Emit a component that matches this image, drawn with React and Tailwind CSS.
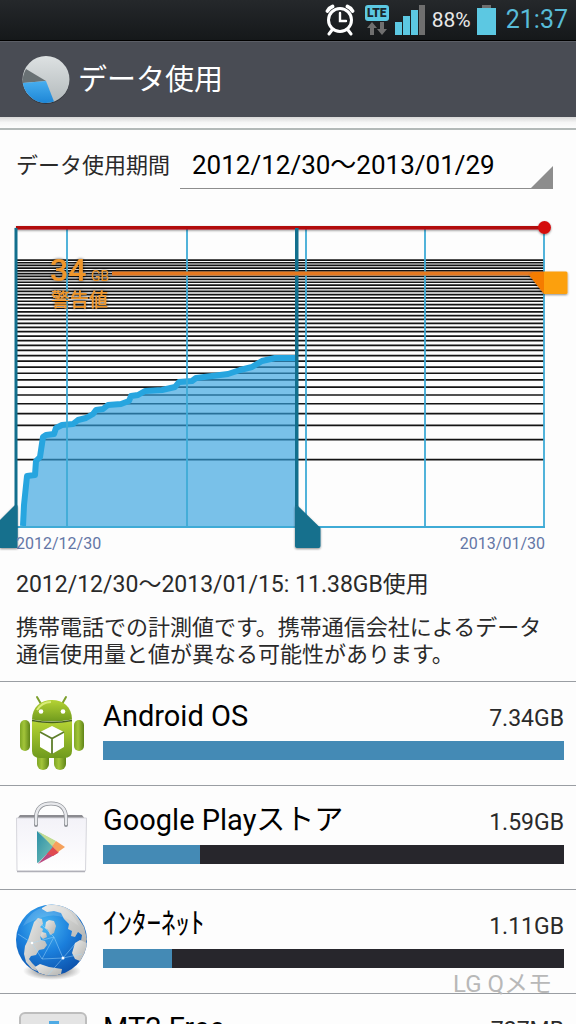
import React from 'react';

const APPS = [
  { name: 'Android OS', usage: '7.34GB', percent: 100, Icon: AndroidIcon },
  { name: 'Google Playストア', usage: '1.59GB', percent: 21, Icon: PlayStoreIcon },
  { name: 'ｲﾝﾀｰﾈｯﾄ', usage: '1.11GB', percent: 15, Icon: GlobeIcon },
  { name: 'MT2 Free', usage: '727MB', percent: 10, Icon: DownloadIcon },
];

const CHART_BOTTOM = 527;
const WEEKS = [67, 187, 306, 425, 544];

// One line per gigabyte on a compressed scale
const GIGABYTES = Array.from({ length: 39 }, (_, i) => CHART_BOTTOM - 67.3 * Math.pow(i + 1, 0.376));

const SERIES =
  '23,526 24,505 27,476 35,475 36,461 40,457 43,437 46,435 54,434 56,428 62,425 73,424 78,420 86,418 93,414 96,410 103,409 108,405 121,404 129,401 131,396 138,395 145,391 162,390 175,387 179,382 192,381 196,378 212,376 228,374 240,370 252,367 262,361 275,358 296,358';

function AlarmIcon() {
  return (
    <svg viewBox="0 0 30 32" className="w-[30px] h-8" fill="none" stroke="white" strokeLinecap="round">
      <circle cx="15" cy="16" r="11.5" strokeWidth="3" />
      <path d="M15 9v8h6" strokeWidth="2.4" />
      <path d="M2.500 7a9 9 0 0 1 5-4.500M27.500 7a9 9 0 0 0-5-4.500" strokeWidth="3.800" />
      <path d="M7 26l-3 4M23 26l3 4" strokeWidth="3" />
    </svg>
  );
}

function LteIcon() {
  return (
    <div className="flex flex-col items-center gap-px w-6">
      <span className="w-6 rounded-[3px] bg-[#5cc8e2] text-center text-[12px] leading-4 font-black text-[#1b262c]">LTE</span>
      <svg viewBox="0 0 20 13" className="w-5 h-[13px]" fill="#6f6f6f">
        <path d="M5 0l5 6H7v7H3V6H0zM15 13l-5-6h3V0h4v7h3z" />
      </svg>
    </div>
  );
}

function SignalIcon() {
  return (
    <svg viewBox="0 0 31 30" className="w-[31px] h-[30px]" fill="#5cc8e2">
      <rect x="0" y="17" width="7" height="13" />
      <rect x="8" y="11" width="7" height="19" />
      <rect x="16" y="5" width="7" height="25" />
      <rect x="24" y="0" width="6" height="30" fill="#6f6f6f" />
    </svg>
  );
}

function BatteryIcon() {
  return (
    <svg viewBox="0 0 19 30" className="w-[19px] h-[30px]">
      <rect x="5" y="0" width="9" height="4" fill="#6f6f6f" />
      <rect x="0" y="3" width="19" height="27" fill="#5cc8e2" />
    </svg>
  );
}

function PieIcon() {
  return (
    <svg viewBox="0 0 48 48" className="w-12 h-12">
      <defs>
        <linearGradient id="pieGray" x1="0" y1="0" x2="0" y2="1">
          <stop offset="0" stopColor="#dde1e2" />
          <stop offset="1" stopColor="#b3babc" />
        </linearGradient>
        <linearGradient id="pieBlue" x1="0" y1="0" x2="0" y2="1">
          <stop offset="0" stopColor="#47aef0" />
          <stop offset="1" stopColor="#1e86d6" />
        </linearGradient>
      </defs>
      <circle cx="24" cy="24.500" r="23.500" fill="#33363c" />
      <circle cx="24" cy="23.500" r="23.500" fill="url(#pieGray)" />
      <path d="M24 25L4 13A23.500 23.500 0 0 0 .800 27z" fill="#697174" />
      <path d="M24 25L.800 27A23.500 23.500 0 0 0 32 45.600z" fill="url(#pieBlue)" />
    </svg>
  );
}

function AndroidIcon() {
  return (
    <svg viewBox="0 0 72 80" className="w-[72px] h-20">
      <defs>
        <linearGradient id="droid" x1="0" y1="0" x2="0" y2="1">
          <stop offset="0" stopColor="#b5d334" />
          <stop offset="1" stopColor="#6f9a1d" />
        </linearGradient>
        <linearGradient id="droidLimb" x1="0" y1="0" x2="1" y2="0">
          <stop offset="0" stopColor="#7fa625" />
          <stop offset=".4" stopColor="#a3c53a" />
          <stop offset="1" stopColor="#5f8418" />
        </linearGradient>
      </defs>
      <path d="M25 10l-4-7M46 10l4-7" stroke="#7c9f2c" strokeWidth="2" strokeLinecap="round" />
      <rect x="21" y="58" width="12" height="18" rx="6" fill="url(#droidLimb)" />
      <rect x="38" y="58" width="12" height="18" rx="6" fill="url(#droidLimb)" />
      <rect x="4" y="26" width="10" height="31" rx="5" fill="url(#droidLimb)" />
      <rect x="58" y="26" width="10" height="31" rx="5" fill="url(#droidLimb)" />
      <path d="M16 25.500C16 13 25 6 36 6s20 7 20 19.500q-20 4-40 0z" fill="url(#droid)" />
      <path d="M16 27q20 4 40 0v30q0 7-8 7H24q-8 0-8-7z" fill="url(#droid)" />
      <path d="M16 26.500q20 4 40 0" fill="none" stroke="#46611a" strokeWidth="1.500" />
      <path d="M21 16q5-8 14-8" stroke="#d9ec78" strokeWidth="2" fill="none" />
      <circle cx="25" cy="17.500" r="2.300" fill="white" />
      <circle cx="47" cy="17.500" r="2.300" fill="white" />
      <path d="M36 32l12 6v15l-12 7-12-7V38z" fill="white" />
      <path d="M24 38l12 6.500L48 38M36 44.500V60" stroke="#5f7f2c" strokeWidth="1.800" fill="none" />
    </svg>
  );
}

function PlayStoreIcon() {
  return (
    <svg viewBox="0 0 72 80" className="w-[72px] h-20">
      <defs>
        <linearGradient id="bag" x1="0" y1="0" x2="0" y2="1">
          <stop offset="0" stopColor="#f3f2f8" />
          <stop offset="1" stopColor="#ffffff" />
        </linearGradient>
        <linearGradient id="playTeal" x1="0" y1="0" x2="1" y2="1">
          <stop offset="0" stopColor="#2b8fa6" />
          <stop offset="1" stopColor="#7cc4b8" />
        </linearGradient>
      </defs>
      <path d="M4 17h62l3 4H1z" fill="#8b8b90" />
      <path d="M.500 20h70l-1 53H1z" fill="url(#bag)" stroke="#d6d6dc" />
      <path d="M1 73.500h68" stroke="#b0b0b8" strokeWidth="1.500" />
      <path d="M20 27V20C20 10 26 5.500 35 5.500S50 10 50 20v7" fill="none" stroke="#8c8f95" strokeWidth="4" strokeLinecap="round" />
      <path d="M20 26V20C20 10 26 5.500 35 5.500S50 10 50 20v6" fill="none" stroke="#e8e9ec" strokeWidth="2.500" strokeLinecap="round" />
      <path d="M21 33l17 16-16 16q-1 0-1-1z" fill="url(#playTeal)" />
      <path d="M21 33l18 10-3 4z" fill="#7fbfa0" />
      <path d="M23 34l17 9-4 5z" fill="#c3dc92" />
      <path d="M22 66l15-17 5 6z" fill="#b9487f" />
      <path d="M31 56l6-7 6 5-6 4z" fill="#e04a50" />
      <path d="M36 48l4-5 9 6-7 5z" fill="#f5a15c" />
    </svg>
  );
}

function GlobeIcon() {
  return (
    <svg viewBox="0 0 72 80" className="w-[72px] h-20">
      <defs>
        <radialGradient id="sea" cx=".4" cy=".3" r=".75">
          <stop offset="0" stopColor="#4bb8f2" />
          <stop offset=".5" stopColor="#1b7fdc" />
          <stop offset="1" stopColor="#0c4fa8" />
        </radialGradient>
        <linearGradient id="land" x1="0" y1="0" x2="1" y2="1">
          <stop offset="0" stopColor="#ececea" />
          <stop offset="1" stopColor="#b0b1af" />
        </linearGradient>
        <radialGradient id="globeShadow">
          <stop offset=".5" stopColor="#777" stopOpacity=".6" />
          <stop offset="1" stopColor="#777" stopOpacity="0" />
        </radialGradient>
        <clipPath id="globeClip">
          <circle cx="35.500" cy="38" r="35.500" />
        </clipPath>
      </defs>
      <ellipse cx="36" cy="69" rx="29" ry="9" fill="url(#globeShadow)" />
      <circle cx="35.500" cy="38" r="35.500" fill="url(#sea)" />
      <g clipPath="url(#globeClip)" fill="url(#land)">
        {/* North America */}
        <path d="M18 20l4-4 4 1 1 5-3 3 3 2-1 4-2 3 1 4 4 1 2 4-3 4-5 1-3 5-5 1-2 3 3 4 4 4 1 4-5-2-6-7-2-8 1-8 3-6z" />
        {/* Greenland */}
        <path d="M33 18l5 1 2 5-2 7-4 2-2-5-3-2 1-6z" />
        <path d="M26 30l4 1 1 4-4 2-3-3z" />
        {/* Arctic coast to Europe */}
        <path d="M26 6l7-4 14 1 12 8 9 14 3 12-2 6-4-4 1-6-4-3-3 5-4-1 1-5-4-2 1-5-5-5-3-6-7-2-7 1-5-3z" />
        {/* Africa */}
        <path d="M59 41l5-3 7 3v10l-7 8-5-2-3-6z" />
        {/* South America */}
        <path d="M19 65l5-3 9 3 13 2-1 5-10 3-12-4z" />
      </g>
      <g clipPath="url(#globeClip)" stroke="#a6dcfa" strokeWidth=".6" opacity=".8" fill="none">
        <path d="M2 32l14 9 22-6 9 21 12-14M16 41l10 16 21-1-15 17M47 56l19-4M38 35L21 18M26 57l12-22" />
      </g>
      <circle cx="47" cy="56" r="1.500" fill="white" />
      <circle cx="16" cy="41" r="1.300" fill="white" />
      <path d="M7 24Q16 5 35 4t28 20Q46 11 32 14T7 24z" fill="white" opacity=".15" />
    </svg>
  );
}

function DownloadIcon() {
  return (
    <svg viewBox="0 0 72 80" className="w-[72px] h-20">
      <rect x="4" y="7" width="66" height="66" rx="5" fill="#e4e4e4" stroke="#bdbdbd" strokeWidth="2" />
      <path d="M33 15h10v18h10L38 51 23 33h10z" fill="#4eaae4" />
    </svg>
  );
}

function StatusBar() {
  return (
    <header className="flex items-center justify-end h-[41px] shrink-0 px-2 bg-linear-to-b from-[#25282b] to-[#15181a] border-b border-black">
      <AlarmIcon />
      <div className="flex items-center gap-1.5 ml-2.5">
        <LteIcon />
        <SignalIcon />
        <span className="text-[21px] leading-7 text-[#e8e8e8]">88%</span>
        <BatteryIcon />
      </div>
      <time className="ml-2.5 text-[25px] leading-8 text-[#58bcd8]">21:37</time>
    </header>
  );
}

function UsageChart() {
  return (
    <svg viewBox="0 189 576 371" className="block w-full h-auto">
      <defs>
        <filter id="drop" x="-20%" y="-20%" width="140%" height="150%">
          <feDropShadow dx="0" dy="1" stdDeviation="1" floodColor="#000" floodOpacity=".45" />
        </filter>
        <filter id="textDrop" x="-20%" y="-20%" width="140%" height="150%">
          <feDropShadow dx="0" dy="0" stdDeviation="1.5" floodColor="#000" floodOpacity=".7" />
        </filter>
      </defs>

      {/* Grid */}
      <g stroke="#141414" strokeWidth="1.7">
        {GIGABYTES.map((y) => (
          <line key={y} x1="17" y1={y} x2="544" y2={y} />
        ))}
      </g>

      {/* Usage so far */}
      <polygon points={`23,527 ${SERIES} 296,527`} fill="#33a1de" fillOpacity=".65" />
      <polyline points={SERIES} fill="none" stroke="#27a5df" strokeWidth="6" strokeLinejoin="round" />

      <g stroke="#3fabd6" strokeWidth="1.8">
        {WEEKS.map((x) => (
          <line key={x} x1={x} y1="229" x2={x} y2={CHART_BOTTOM} />
        ))}
        <line x1="17" y1={CHART_BOTTOM} x2="545" y2={CHART_BOTTOM} />
      </g>

      {/* Limit */}
      <g filter="url(#drop)">
        <rect x="16" y="226" width="528" height="3.500" fill="#b3090f" />
        <circle cx="544.5" cy="227.500" r="6.500" fill="#d40c10" />
      </g>

      {/* Selected range */}
      <g fill="#126f8d">
        <rect x="14.500" y="228" width="3" height="310" />
        <rect x="295" y="228" width="3.500" height="310" />
        <path d="M0 520l14.500-14.500h3V548H0z" filter="url(#drop)" />
        <path d="M295 506h3l22.500 22v18q0 2-2 2H297q-2 0-2-2z" filter="url(#drop)" />
      </g>

      {/* Warning */}
      <rect x="112" y="271.500" width="432" height="4" fill="#e57a22" />
      <g filter="url(#drop)">
        <path d="M529 275l4-3h11v22z" fill="#f57c00" />
        <path d="M544 271.500h22q1.500 0 1.500 1.500v19.500q0 1.500-1.500 1.500h-22z" fill="#fca00f" />
      </g>
      <g fill="#f0962a" fontWeight="500" filter="url(#textDrop)">
        <text x="50" y="281" fontSize="32">34</text>
        <text x="91" y="281" fontSize="14" fontWeight="400">GB</text>
        <text x="51" y="307" fontSize="19">警告値</text>
      </g>

      <g fill="#6376a6" fontSize="16">
        <text x="16" y="549">2012/12/30</text>
        <text x="545" y="549" textAnchor="end">2013/01/30</text>
      </g>
    </svg>
  );
}

function AppRow({ name, usage, percent, Icon }) {
  return (
    <li className="flex border-t border-[#9a9ea3] pl-4 pr-3">
      <div className="w-[87px] pt-3 shrink-0">
        <Icon />
      </div>
      <div className="flex-1 pt-3.5 pb-[25px]">
        <div className="flex justify-between items-baseline">
          <h2 className="text-[29px] leading-10 text-black">{name}</h2>
          <span className="text-[23px] leading-8">{usage}</span>
        </div>
        <div className="mt-[5px] h-[19px] bg-[#27262c]">
          <div className="h-full bg-[#448ab5]" style={{ width: `${percent}%` }} />
        </div>
      </div>
    </li>
  );
}

export default function App() {
  return (
    <div className="relative flex flex-col h-screen overflow-hidden bg-[#fdfdfd] text-[#2a2a2a] font-[Roboto,'Noto_Sans_CJK_JP',sans-serif]">
      <StatusBar />

      <div className="flex items-center gap-2 h-[76px] shrink-0 pl-[22px] bg-[#494c54] border-t border-[#5b5e66]">
        <PieIcon />
        <h1 className="text-[29px] leading-10 text-white">データ使用</h1>
      </div>

      <main className="flex-1 min-h-0 overflow-hidden">
        <div className="h-[13px] bg-linear-to-b from-[#d8d8d8] via-[#f6f6f6] to-[#fdfdfd] border-b-2 border-[#b3b9b8]" />

        <div className="flex items-center gap-1.5 mt-[13px] pl-4 pr-[23px]">
          <label htmlFor="cycle" className="w-[158px] text-[22px] leading-8 whitespace-nowrap">
            データ使用期間
          </label>
          <div className="relative flex-1 border-b border-[#8d8d8d]">
            <select id="cycle" className="w-full h-[45px] px-3 appearance-none bg-transparent text-[26px] text-black outline-none">
              <option>2012/12/30～2013/01/29</option>
            </select>
            <svg viewBox="0 0 22 22" className="absolute right-0 bottom-0 w-[22px] h-[22px] pointer-events-none">
              <path d="M22 0v22H0z" fill="#8d8d8d" />
            </svg>
          </div>
        </div>

        <UsageChart />

        <section className="px-4 pt-2.5 pb-[13px]">
          <p className="text-[23px] leading-[30px]">2012/12/30～2013/01/15: 11.38GB使用</p>
          <p className="mt-3.5 text-[22px] leading-[27px]">
            携帯電話での計測値です。携帯通信会社によるデータ通信使用量と値が異なる可能性があります。
          </p>
        </section>

        <ul>
          {APPS.map((app) => (
            <AppRow key={app.name} {...app} />
          ))}
        </ul>
      </main>

      <span className="absolute right-6 bottom-6 text-[24px] leading-8 text-[#b8b8b8]">LG Qメモ</span>
    </div>
  );
}
